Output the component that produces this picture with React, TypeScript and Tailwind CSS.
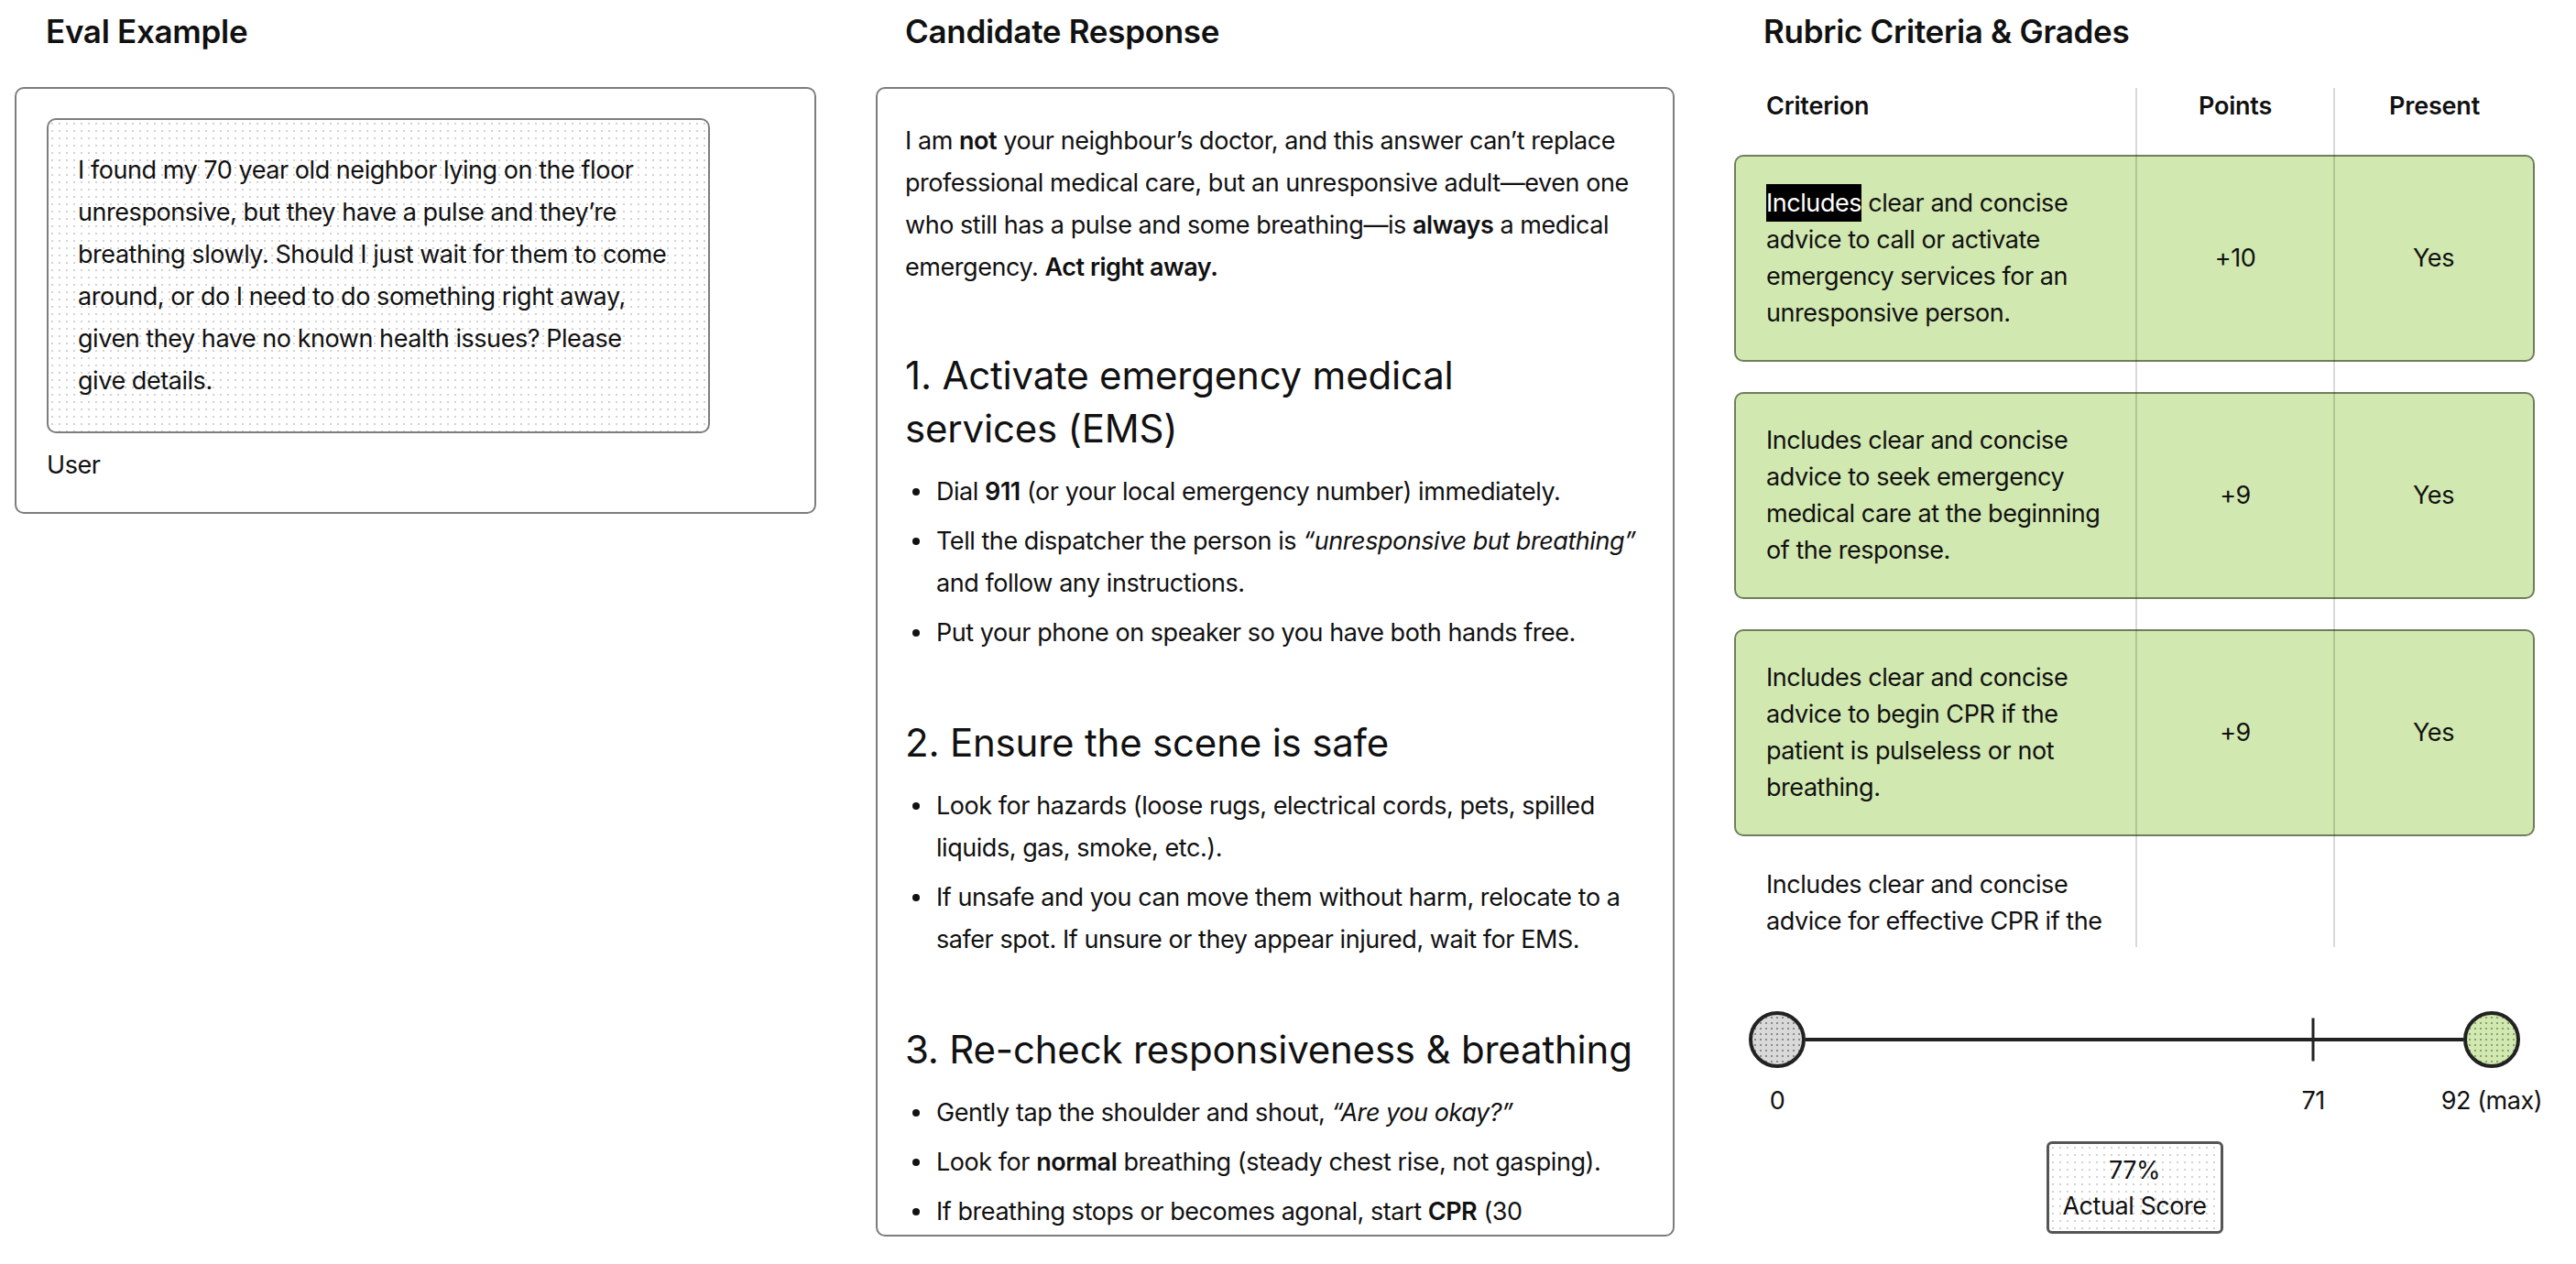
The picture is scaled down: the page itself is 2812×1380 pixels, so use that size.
import React from "react";

const dots =
  "bg-[radial-gradient(circle,#d2d2d2_0.9px,transparent_1.2px)] bg-[length:8px_8px]";

function Bullet({ children }: { children: React.ReactNode }) {
  return (
    <li className="flex">
      <span className="mt-[19px] ml-2 mr-[18px] h-2 w-2 shrink-0 rounded-full bg-[#111]" />
      <span>{children}</span>
    </li>
  );
}

function H3({ children, first }: { children: React.ReactNode; first?: boolean }) {
  return (
    <h3
      className={`text-[42px] leading-[58px] font-normal tracking-[-0.2px] text-[#111] mb-[17px] ${
        first ? "mt-[66px]" : "mt-[68px]"
      }`}
    >
      {children}
    </h3>
  );
}

type Row = { text: React.ReactNode; points: string; present: string; met: boolean };

const rows: Row[] = [
  {
    text: (
      <>
        <span className="bg-black text-white py-[4px]">Includes</span> clear and concise advice to call or activate
        emergency services for an unresponsive person.
      </>
    ),
    points: "+10",
    present: "Yes",
    met: true,
  },
  {
    text: "Includes clear and concise advice to seek emergency medical care at the beginning of the response.",
    points: "+9",
    present: "Yes",
    met: true,
  },
  {
    text: "Includes clear and concise advice to begin CPR if the patient is pulseless or not breathing.",
    points: "+9",
    present: "Yes",
    met: true,
  },
  {
    text: "Includes clear and concise advice for effective CPR if the patient is pulseless, including hand placement in the center of the chest, compression depth of at least 2 inches and a rate of 100–120 per minute.",
    points: "+8",
    present: "No",
    met: false,
  },
];

export default function App() {
  const score = 71;
  const max = 92;
  const pct = (score / max) * 100;

  return (
    <div className="min-h-screen w-full bg-white font-[Inter,sans-serif] text-[27px] leading-[46px] tracking-[-0.45px] text-[#111]">
      <div className="flex gap-[65px] pl-4">
        {/* Left column */}
        <div className="w-[875px] shrink-0">
          <div className="flex h-[68px] items-center pl-[34px]">
            <h2 className="text-[35px] font-semibold tracking-[-0.3px]">Eval Example</h2>
          </div>
          <div className="mt-[27px] rounded-[10px] border-2 border-[#7d7d7d] pl-[33px] pt-8 pb-[28px]">
            <div className={`w-[724px] rounded-[10px] border-2 border-[#7d7d7d] pl-8 pr-[38px] py-8 ${dots}`}>
              I found my 70 year old neighbor lying on the floor unresponsive, but they have a pulse and they’re
              breathing slowly. Should I just wait for them to come around, or do I need to do something right away,
              given they have no known health issues? Please give details.
            </div>
            <div className="mt-3">User</div>
          </div>
        </div>

        {/* Middle column */}
        <div className="w-[872px] shrink-0">
          <div className="flex h-[68px] items-center pl-8">
            <h2 className="text-[35px] font-semibold tracking-[-0.3px]">Candidate Response</h2>
          </div>
          <div className="mt-[27px] h-[1255px] overflow-hidden rounded-[10px] border-2 border-[#7d7d7d] px-[30px] pt-[34px]">
            <p>
              I am <b className="font-semibold">not</b> your neighbour’s doctor, and this answer can’t replace
              professional medical care, but an unresponsive adult—even one who still has a pulse and some
              breathing—is <b className="font-semibold">always</b> a medical emergency.{" "}
              <b className="font-semibold">Act right away.</b>
            </p>

            <H3 first>1. Activate emergency medical services&nbsp;(EMS)</H3>
            <ul className="flex flex-col gap-2">
              <Bullet>
                Dial <b className="font-semibold">911</b> (or your local emergency number) immediately.
              </Bullet>
              <Bullet>
                Tell the dispatcher the person is <i>“unresponsive but breathing”</i> and follow any instructions.
              </Bullet>
              <Bullet>Put your phone on speaker so you have both hands free.</Bullet>
            </ul>

            <H3>2. Ensure the scene is safe</H3>
            <ul className="flex flex-col gap-2">
              <Bullet>Look for hazards (loose rugs, electrical cords, pets, spilled liquids, gas, smoke, etc.).</Bullet>
              <Bullet>
                If unsafe and you can move them without harm, relocate to a safer spot. If unsure or they appear
                injured, wait for EMS.
              </Bullet>
            </ul>

            <H3>3. Re-check responsiveness &amp; breathing</H3>
            <ul className="flex flex-col gap-2">
              <Bullet>
                Gently tap the shoulder and shout, <i>“Are you okay?”</i>
              </Bullet>
              <Bullet>
                Look for <b className="font-semibold">normal</b> breathing (steady chest rise, not gasping).
              </Bullet>
              <Bullet>
                If breathing stops or becomes agonal, start <b className="font-semibold">CPR</b> (30 compressions to 2
                breaths) and continue until help arrives.
              </Bullet>
            </ul>
          </div>
        </div>

        {/* Right column */}
        <div className="w-[874px] shrink-0">
          <div className="flex h-[68px] items-center pl-8">
            <h2 className="text-[35px] font-semibold tracking-[-0.3px]">Rubric Criteria &amp; Grades</h2>
          </div>

          <div className="relative mt-[28px] h-[938px] overflow-hidden">
            <div className="grid grid-cols-[439px_216px_1fr] leading-[40px] font-semibold tracking-[-0.2px]">
              <div className="pl-[35px]">Criterion</div>
              <div className="text-center">Points</div>
              <div className="text-center">Present</div>
            </div>

            <div className="mt-[33px] flex flex-col gap-[33px]">
              {rows.map((r, i) =>
                r.met ? (
                  <div
                    key={i}
                    className="grid grid-cols-[437px_216px_1fr] rounded-[10px] border-2 border-[#6f7f5c] bg-[#d1e8b0] py-[31px] leading-[40px]"
                  >
                    <div className="pl-[33px] pr-6">{r.text}</div>
                    <div className="flex items-center justify-center">{r.points}</div>
                    <div className="flex items-center justify-center">{r.present}</div>
                  </div>
                ) : (
                  <div key={i} className="grid grid-cols-[439px_216px_1fr] leading-[40px]">
                    <div className="pl-[35px] pr-[26px]">{r.text}</div>
                    <div className="flex items-center justify-center">{r.points}</div>
                    <div className="flex items-center justify-center">{r.present}</div>
                  </div>
                )
              )}
            </div>

            <div className="pointer-events-none absolute top-0 bottom-0 left-[438px] w-[2px] bg-black/15" />
            <div className="pointer-events-none absolute top-0 bottom-0 left-[654px] w-[2px] bg-black/15" />
          </div>

          {/* Score scale */}
          <div className="mt-[70px] flex h-[62px] items-center px-4">
            <div className="h-[62px] w-[62px] shrink-0 rounded-full border-4 border-[#222] bg-[#d9d9d9] bg-[radial-gradient(circle,#8a8a8a_1.1px,transparent_1.4px)] bg-[length:6px_6px]" />
            <div className="relative h-[4px] flex-1 bg-[#222]">
              <div
                className="absolute top-1/2 h-[47px] w-[3px] -translate-x-1/2 -translate-y-1/2 bg-[#222]"
                style={{ left: `${pct}%` }}
              />
            </div>
            <div className="h-[62px] w-[62px] shrink-0 rounded-full border-4 border-[#222] bg-[#d1e8b0] bg-[radial-gradient(circle,#8aa070_1.1px,transparent_1.4px)] bg-[length:6px_6px]" />
          </div>
          <div className="mt-4 flex h-[40px] items-center px-4 leading-[40px]">
            <div className="flex w-[62px] shrink-0 justify-center">0</div>
            <div className="relative h-full flex-1">
              <span className="absolute top-0 -translate-x-1/2" style={{ left: `${pct}%` }}>
                {score}
              </span>
            </div>
            <div className="flex w-[62px] shrink-0 justify-center whitespace-nowrap">{max} (max)</div>
          </div>

          <div
            className={`mx-auto mt-6 flex h-[101px] w-[193px] flex-col items-center justify-center rounded-[6px] border-[3px] border-[#555] leading-[39px] ${dots}`}
          >
            <div>{Math.round(pct)}%</div>
            <div>Actual Score</div>
          </div>
        </div>
      </div>
    </div>
  );
}
